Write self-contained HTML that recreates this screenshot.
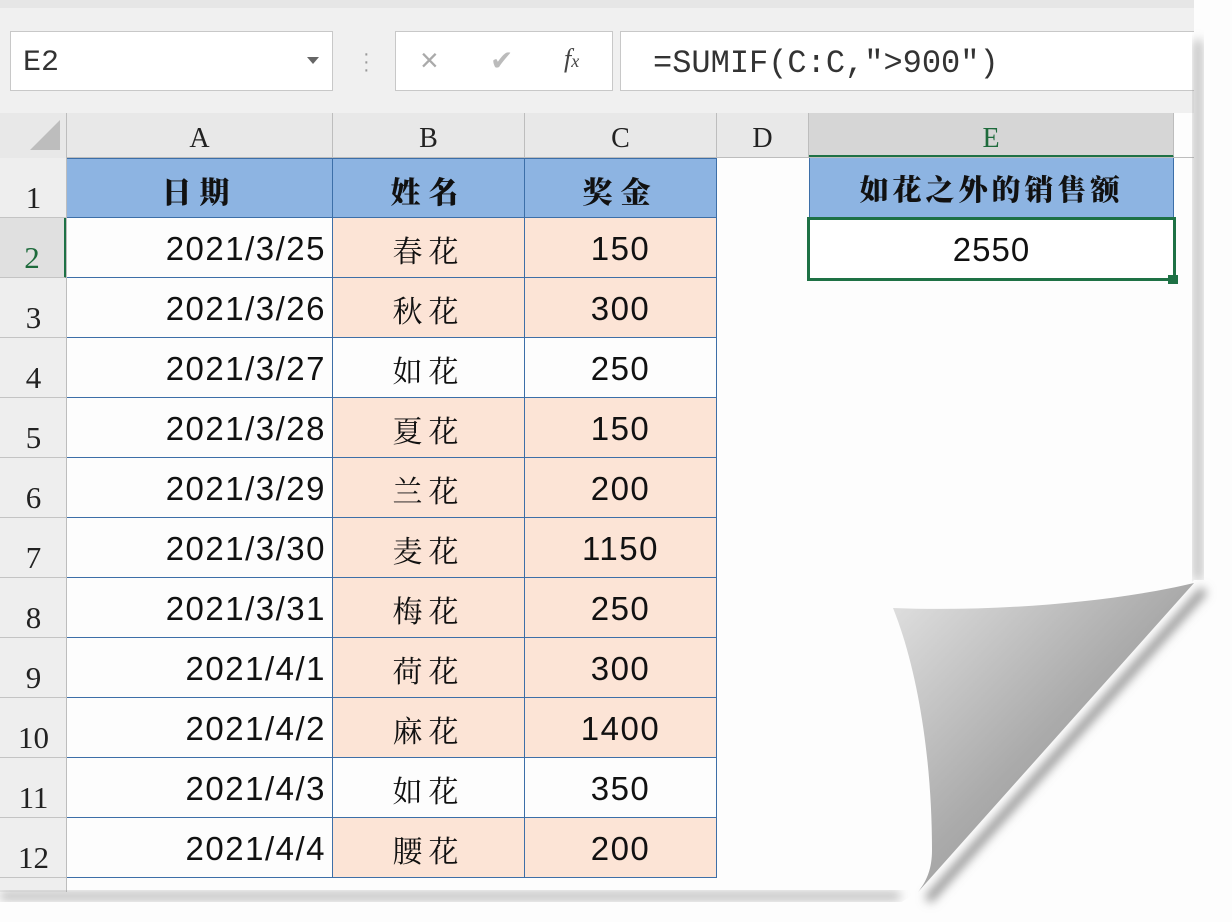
<!DOCTYPE html>
<html><head><meta charset="utf-8"><style>
body{margin:0;width:1232px;height:922px;background:#fdfdfd;position:relative;overflow:hidden;font-family:"Liberation Sans","Noto Sans CJK SC",sans-serif}
.a{position:absolute;box-sizing:border-box}
.top{left:0;top:0;width:1200px;height:113px;background:#f0f0f0;border-top:8px solid #e6e6e6}
.box{background:#fff;border:1px solid #c8c8c8}
.ser{font-family:"Liberation Serif","Noto Serif CJK SC",serif}
.mono{font-family:"Liberation Mono","Noto Sans CJK SC",monospace}
.ch{top:113px;height:45px;background:#e8e8e8;border-right:1px solid #bdbdbd;text-align:center;font-size:28px;line-height:52px;color:#222}
.rn{left:0;width:67px;height:60px;background:#eeeeee;border-bottom:1px solid #c4c4c4;font-size:31px;text-align:center;padding-top:22px;color:#222}
.c{height:60px;border:1px solid #3d6fa8;border-top:none;border-left:none;font-size:33px;line-height:62px;color:#111;letter-spacing:1.5px}
.hd{background:#8db4e2;font-family:"Noto Serif CJK SC",serif;font-weight:900;text-align:center;letter-spacing:8px;font-size:30px}
.pk{background:#fce4d6}
.kai{font-family:"Noto Serif CJK SC",serif;text-align:center;letter-spacing:6px;font-size:30px}
</style></head><body>
<div class="a top"></div>
<div class="a box mono" style="left:10px;top:31px;width:323px;height:60px;font-size:30px;line-height:62px;padding-left:12px;color:#333">E2</div>
<div class="a" style="left:307px;top:57px;width:0;height:0;border-left:6px solid transparent;border-right:6px solid transparent;border-top:7px solid #666"></div>
<div class="a" style="left:363px;top:50px;color:#999;font-size:20px;line-height:8px">·<br>·<br>·</div>
<div class="a box" style="left:395px;top:31px;width:218px;height:60px"></div>
<div class="a" style="left:420px;top:42px;font-size:32px;color:#aaa">×</div>
<div class="a" style="left:490px;top:44px;font-size:28px;color:#bbb">✔</div>
<div class="a ser" style="left:564px;top:44px;font-size:26px;font-style:italic;color:#444">f<span style="font-size:18px">x</span></div>
<div class="a box mono" style="left:620px;top:31px;width:582px;height:60px;font-size:32px;line-height:64px;padding-left:32px;color:#333">=SUMIF(C:C,″&gt;900″)</div>

<div class="a" style="left:0;top:113px;width:67px;height:45px;background:#e8e8e8;border-right:1px solid #bdbdbd"></div>
<div class="a" style="left:30px;top:120px;width:0;height:0;border-left:30px solid transparent;border-bottom:30px solid #bdbdbd"></div>
<div class="a ch ser" style="left:67px;width:266px">A</div>
<div class="a ch ser" style="left:333px;width:192px">B</div>
<div class="a ch ser" style="left:525px;width:192px">C</div>
<div class="a ch ser" style="left:717px;width:92px">D</div>
<div class="a ch ser" style="left:809px;width:365px;background:#d6d6d6;color:#1e6b3c;border-bottom:3px solid #1e7145">E</div>
<div class="a" style="left:67px;top:157px;width:1127px;height:1px;background:#bdbdbd"></div>

<div class="a rn ser" style="top:158px">1</div>
<div class="a rn ser" style="top:218px;color:#1e6b3c;border-right:3px solid #1e7145;background:#e0e0e0">2</div>
<div class="a rn ser" style="top:278px">3</div>
<div class="a rn ser" style="top:338px">4</div>
<div class="a rn ser" style="top:398px">5</div>
<div class="a rn ser" style="top:458px">6</div>
<div class="a rn ser" style="top:518px">7</div>
<div class="a rn ser" style="top:578px">8</div>
<div class="a rn ser" style="top:638px">9</div>
<div class="a rn ser" style="top:698px">10</div>
<div class="a rn ser" style="top:758px">11</div>
<div class="a rn ser" style="top:818px">12</div>
<div class="a" style="left:0;top:878px;width:67px;height:14px;background:#eeeeee;border-right:1px solid #bdbdbd"></div>
<div class="a" style="left:66px;top:158px;width:1px;height:734px;background:#bdbdbd"></div>

<div class="a c hd" style="left:67px;top:158px;width:266px;border-top:1px solid #3d6fa8">日期</div>
<div class="a c hd" style="left:333px;top:158px;width:192px;border-top:1px solid #3d6fa8">姓名</div>
<div class="a c hd" style="left:525px;top:158px;width:192px;border-top:1px solid #3d6fa8">奖金</div>

<div class="a c" style="left:67px;top:218px;width:266px;text-align:right;padding-right:6px">2021/3/25</div><div class="a c kai pk" style="left:333px;top:218px;width:192px">春花</div><div class="a c pk" style="left:525px;top:218px;width:192px;text-align:center">150</div>
<div class="a c" style="left:67px;top:278px;width:266px;text-align:right;padding-right:6px">2021/3/26</div><div class="a c kai pk" style="left:333px;top:278px;width:192px">秋花</div><div class="a c pk" style="left:525px;top:278px;width:192px;text-align:center">300</div>
<div class="a c" style="left:67px;top:338px;width:266px;text-align:right;padding-right:6px">2021/3/27</div><div class="a c kai" style="left:333px;top:338px;width:192px">如花</div><div class="a c" style="left:525px;top:338px;width:192px;text-align:center">250</div>
<div class="a c" style="left:67px;top:398px;width:266px;text-align:right;padding-right:6px">2021/3/28</div><div class="a c kai pk" style="left:333px;top:398px;width:192px">夏花</div><div class="a c pk" style="left:525px;top:398px;width:192px;text-align:center">150</div>
<div class="a c" style="left:67px;top:458px;width:266px;text-align:right;padding-right:6px">2021/3/29</div><div class="a c kai pk" style="left:333px;top:458px;width:192px">兰花</div><div class="a c pk" style="left:525px;top:458px;width:192px;text-align:center">200</div>
<div class="a c" style="left:67px;top:518px;width:266px;text-align:right;padding-right:6px">2021/3/30</div><div class="a c kai pk" style="left:333px;top:518px;width:192px">麦花</div><div class="a c pk" style="left:525px;top:518px;width:192px;text-align:center">1150</div>
<div class="a c" style="left:67px;top:578px;width:266px;text-align:right;padding-right:6px">2021/3/31</div><div class="a c kai pk" style="left:333px;top:578px;width:192px">梅花</div><div class="a c pk" style="left:525px;top:578px;width:192px;text-align:center">250</div>
<div class="a c" style="left:67px;top:638px;width:266px;text-align:right;padding-right:6px">2021/4/1</div><div class="a c kai pk" style="left:333px;top:638px;width:192px">荷花</div><div class="a c pk" style="left:525px;top:638px;width:192px;text-align:center">300</div>
<div class="a c" style="left:67px;top:698px;width:266px;text-align:right;padding-right:6px">2021/4/2</div><div class="a c kai pk" style="left:333px;top:698px;width:192px">麻花</div><div class="a c pk" style="left:525px;top:698px;width:192px;text-align:center">1400</div>
<div class="a c" style="left:67px;top:758px;width:266px;text-align:right;padding-right:6px">2021/4/3</div><div class="a c kai" style="left:333px;top:758px;width:192px">如花</div><div class="a c" style="left:525px;top:758px;width:192px;text-align:center">350</div>
<div class="a c" style="left:67px;top:818px;width:266px;text-align:right;padding-right:6px">2021/4/4</div><div class="a c kai pk" style="left:333px;top:818px;width:192px">腰花</div><div class="a c pk" style="left:525px;top:818px;width:192px;text-align:center">200</div>
<div class="a" style="left:332px;top:218px;width:1px;height:660px;background:#3d6fa8"></div>

<div class="a c hd" style="left:809px;top:158px;width:365px;border-left:1px solid #3d6fa8;letter-spacing:4px;font-size:29px">如花之外的销售额</div>
<div class="a" style="left:807px;top:217px;width:369px;height:64px;border:3px solid #1e7145;background:#fff;text-align:center;font-size:33px;line-height:60px;color:#111;letter-spacing:1px">2550</div>
<div class="a" style="left:1168px;top:275px;width:10px;height:9px;background:#1e7145"></div>

<svg class="a" style="left:0;top:0" width="1232" height="922">
<defs>
<linearGradient id="fl" x1="0" y1="0" x2="1" y2="1"><stop offset="0" stop-color="#e2e2e2"/><stop offset=".5" stop-color="#aaaaaa"/><stop offset="1" stop-color="#8a8a8a"/></linearGradient>
<filter id="bl" x="-20%" y="-20%" width="140%" height="140%"><feGaussianBlur stdDeviation="5"/></filter>
</defs>
<rect x="1194" y="0" width="38" height="922" fill="#fdfdfd"/>
<rect x="0" y="892" width="1232" height="30" fill="#fdfdfd"/>
<path d="M1194,40 L1202,40 L1202,580 L1194,580Z" fill="#999" filter="url(#bl)" opacity=".7"/>
<path d="M0,892 L900,892 L900,900 L0,900Z" fill="#999" filter="url(#bl)" opacity=".7"/>
<polygon points="1194,580 1232,580 1232,922 870,922 916,893" fill="#fdfdfd"/>
<path d="M1204,590 L928,900" stroke="#888" stroke-width="8" filter="url(#bl)" fill="none"/>
<path d="M1194,583 C1110,603 990,612 893,608 C918,670 932,760 932,850 C932,870 926,882 918,892 Z" fill="url(#fl)"/>
</svg>
</body></html>
